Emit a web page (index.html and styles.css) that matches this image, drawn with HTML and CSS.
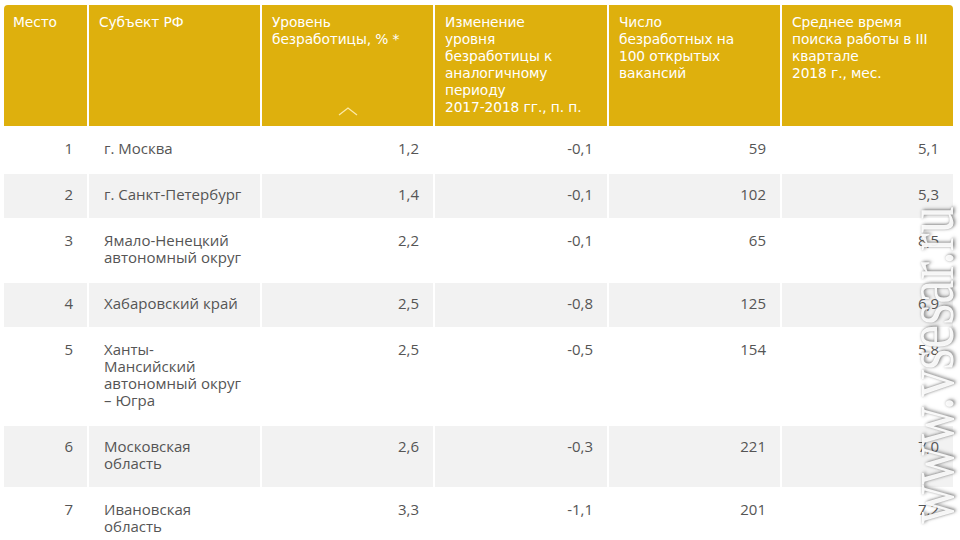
FILE: index.html
```html
<!DOCTYPE html>
<html lang="ru">
<head>
<meta charset="utf-8">
<link rel="stylesheet" href="styles.css">
</head>
<body>
<div class="page">
<table class="rating">
  <colgroup>
    <col class="c-place"><col class="c-wide"><col class="c-wide"><col class="c-wide4"><col class="c-wide"><col class="c-wide">
  </colgroup>
  <thead>
    <tr>
      <th class="first">Место</th>
      <th>Субъект РФ</th>
      <th class="sorted">Уровень<br>безработицы, % *
        <svg class="sort" width="20" height="10" viewBox="0 0 20 10"><path d="M1 9 L10 2 L19 9" fill="none" stroke="#fbe9a8" stroke-width="1.3"/></svg>
      </th>
      <th>Изменение<br>уровня<br>безработицы к<br>аналогичному<br>периоду<br>2017-2018 гг., п. п.</th>
      <th>Число<br>безработных на<br>100 открытых<br>вакансий</th>
      <th class="last">Среднее время<br>поиска работы в III<br>квартале<br>2018 г., мес.</th>
    </tr>
  </thead>
  <tbody>
    <tr><td class="num">1</td><td class="name">г. Москва</td><td class="num">1,2</td><td class="num">-0,1</td><td class="num">59</td><td class="num">5,1</td></tr>
    <tr class="odd"><td class="num">2</td><td class="name">г. Санкт-Петербург</td><td class="num">1,4</td><td class="num">-0,1</td><td class="num">102</td><td class="num">5,3</td></tr>
    <tr><td class="num">3</td><td class="name">Ямало-Ненецкий<br>автономный округ</td><td class="num">2,2</td><td class="num">-0,1</td><td class="num">65</td><td class="num">8,5</td></tr>
    <tr class="odd"><td class="num">4</td><td class="name">Хабаровский край</td><td class="num">2,5</td><td class="num">-0,8</td><td class="num">125</td><td class="num">6,9</td></tr>
    <tr><td class="num">5</td><td class="name">Ханты-<br>Мансийский<br>автономный округ<br>– Югра</td><td class="num">2,5</td><td class="num">-0,5</td><td class="num">154</td><td class="num">5,8</td></tr>
    <tr class="odd"><td class="num">6</td><td class="name">Московская<br>область</td><td class="num">2,6</td><td class="num">-0,3</td><td class="num">221</td><td class="num">7,0</td></tr>
    <tr><td class="num">7</td><td class="name">Ивановская<br>область</td><td class="num">3,3</td><td class="num">-1,1</td><td class="num">201</td><td class="num">7,2</td></tr>
  </tbody>
</table>
<div class="watermark">www.vsesar.ru</div>
</div>
</body>
</html>
```
FILE: styles.css
```css
html, body {
  margin: 0;
  padding: 0;
  background: #ffffff;
}
.page {
  position: relative;
  width: 960px;
  height: 540px;
  overflow: hidden;
  padding: 3px 0 0 2px;
  box-sizing: border-box;
}
.rating {
  border-collapse: separate;
  border-spacing: 2px;
  table-layout: fixed;
  width: 953px;
}
.c-place { width: 83px; }
.c-wide { width: 171px; }
.c-wide4 { width: 172px; }
.rating th {
  background: #deb00d;
  color: #ffffff;
  font-family: "DejaVu Sans", "Open Sans", sans-serif;
  font-weight: normal;
  font-size: 13.8px;
  line-height: 17px;
  text-align: left;
  vertical-align: top;
  padding: 9px 6px 10px 10px;
  height: 102px;
  letter-spacing: -0.1px;
}
.rating th.first { border-top-left-radius: 4px; padding-left: 9px; }
.rating th.last { border-top-right-radius: 4px; }
.rating th.sorted { position: relative; }
.sort {
  position: absolute;
  left: 50%;
  bottom: 10px;
  margin-left: -10px;
}
.rating td {
  font-family: "Open Sans", sans-serif;
  font-size: 15px;
  line-height: 17px;
  color: #555555;
  vertical-align: top;
  padding: 12px 14px 15px 15px;
}
.rating tr.odd td { background: #f2f2f2; }
.rating td.num { text-align: right; }
.watermark {
  position: absolute;
  left: 930px;
  top: 365px;
  transform: translate(-50%, -50%) rotate(-90deg) scaleY(1.25);
  font-family: "Liberation Serif", serif;
  font-size: 54px;
  color: rgba(255,255,255,0.92);
  white-space: nowrap;
  text-shadow: 1px 2px 3px rgba(60,60,60,0.55), 0 0 2px rgba(90,90,90,0.4);
  line-height: 1;
}
```
